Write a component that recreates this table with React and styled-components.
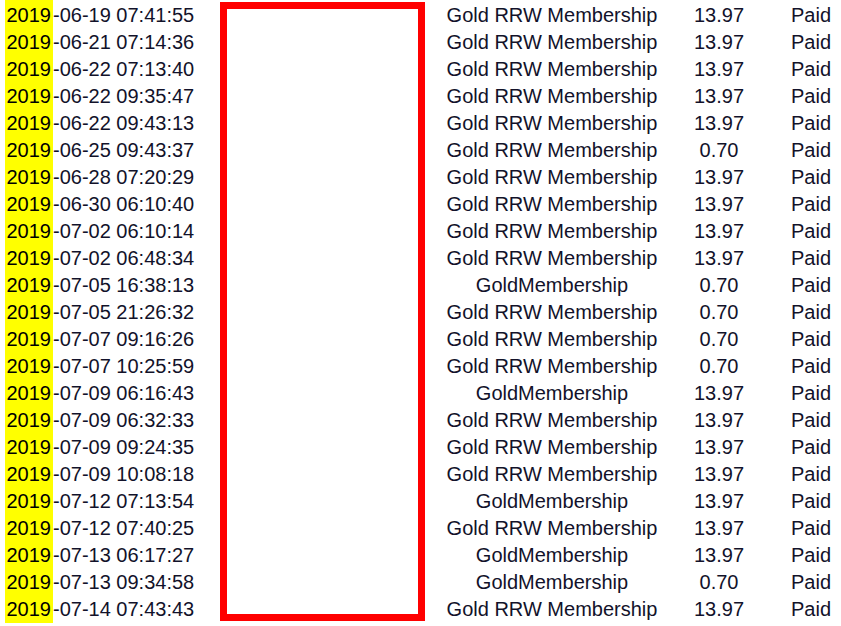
import React from "react";
import styled, { createGlobalStyle } from "styled-components";

const Global = createGlobalStyle`
  html, body { margin: 0; padding: 0; background: #fff; overflow: hidden; }
  body { font-family: "Liberation Sans", Arial, sans-serif; }
`;

const rows = [
  ["2019", "-06-19 07:41:55", "Gold RRW Membership", "13.97", "Paid"],
  ["2019", "-06-21 07:14:36", "Gold RRW Membership", "13.97", "Paid"],
  ["2019", "-06-22 07:13:40", "Gold RRW Membership", "13.97", "Paid"],
  ["2019", "-06-22 09:35:47", "Gold RRW Membership", "13.97", "Paid"],
  ["2019", "-06-22 09:43:13", "Gold RRW Membership", "13.97", "Paid"],
  ["2019", "-06-25 09:43:37", "Gold RRW Membership", "0.70", "Paid"],
  ["2019", "-06-28 07:20:29", "Gold RRW Membership", "13.97", "Paid"],
  ["2019", "-06-30 06:10:40", "Gold RRW Membership", "13.97", "Paid"],
  ["2019", "-07-02 06:10:14", "Gold RRW Membership", "13.97", "Paid"],
  ["2019", "-07-02 06:48:34", "Gold RRW Membership", "13.97", "Paid"],
  ["2019", "-07-05 16:38:13", "GoldMembership", "0.70", "Paid"],
  ["2019", "-07-05 21:26:32", "Gold RRW Membership", "0.70", "Paid"],
  ["2019", "-07-07 09:16:26", "Gold RRW Membership", "0.70", "Paid"],
  ["2019", "-07-07 10:25:59", "Gold RRW Membership", "0.70", "Paid"],
  ["2019", "-07-09 06:16:43", "GoldMembership", "13.97", "Paid"],
  ["2019", "-07-09 06:32:33", "Gold RRW Membership", "13.97", "Paid"],
  ["2019", "-07-09 09:24:35", "Gold RRW Membership", "13.97", "Paid"],
  ["2019", "-07-09 10:08:18", "Gold RRW Membership", "13.97", "Paid"],
  ["2019", "-07-12 07:13:54", "GoldMembership", "13.97", "Paid"],
  ["2019", "-07-12 07:40:25", "Gold RRW Membership", "13.97", "Paid"],
  ["2019", "-07-13 06:17:27", "GoldMembership", "13.97", "Paid"],
  ["2019", "-07-13 09:34:58", "GoldMembership", "0.70", "Paid"],
  ["2019", "-07-14 07:43:43", "Gold RRW Membership", "13.97", "Paid"],
];

const Table = styled.div`
  display: grid;
  grid-template-columns: 220px 205px 254px 80px 1fr;
  grid-auto-rows: 27px;
  width: 841px;
  padding-top: 2px;
  color: #12122a;
  font-size: 20px;
  line-height: 27px;
`;

const Row = styled.div`
  display: contents;
`;

const DateCell = styled.div`
  grid-column: 1;
  padding-left: 5px;
  white-space: nowrap;
`;

const Year = styled.span`
  display: inline-block;
  height: 29px;
  margin-top: -2px;
  padding-top: 2px;
  box-sizing: border-box;
  vertical-align: top;
  background: #ffff00;
  padding-left: 1.5px;
  padding-right: 2px;
  color: #000;
`;

const Redacted = styled.div`
  grid-column: 2;
  grid-row: 1 / span ${(p) => p.$rows};
  margin-bottom: 2px;
  border: 7px solid #ff0000;
  box-sizing: border-box;
  background: #fff;
`;

const Cell = styled.div`
  grid-column: ${(p) => p.$col};
  text-align: center;
  white-space: nowrap;
  padding-left: ${(p) => p.$indent || 0}px;
`;

export default function App() {
  return (
    <>
      <Global />
      <Table>
        <Redacted $rows={rows.length} />
        {rows.map((r, i) => (
          <Row key={i}>
            <DateCell>
              <Year>{r[0]}</Year>
              {r[1]}
            </DateCell>
            <Cell $col={3}>{r[2]}</Cell>
            <Cell $col={4}>{r[3]}</Cell>
            <Cell $col={5} $indent={22}>{r[4]}</Cell>
          </Row>
        ))}
      </Table>
    </>
  );
}
